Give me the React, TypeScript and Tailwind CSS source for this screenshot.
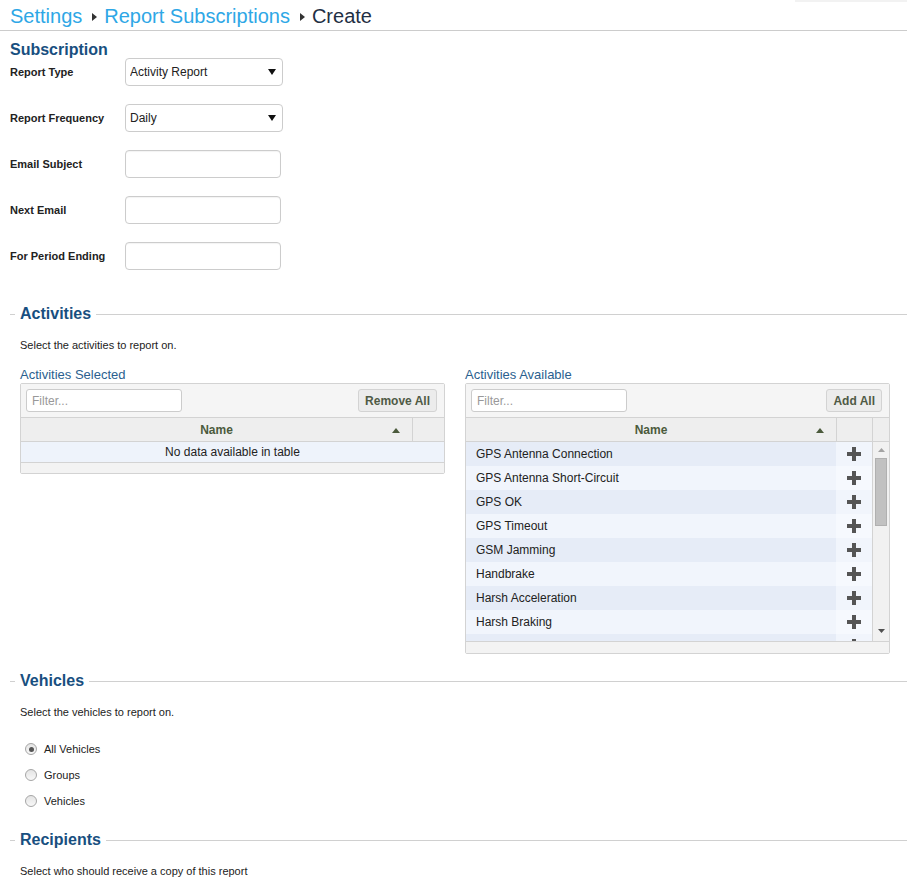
import { useState } from "react"

const activities = [
  "GPS Antenna Connection",
  "GPS Antenna Short-Circuit",
  "GPS OK",
  "GPS Timeout",
  "GSM Jamming",
  "Handbrake",
  "Harsh Acceleration",
  "Harsh Braking",
  "Idling",
]

function Legend({ title }: { title: string }) {
  return (
    <div className="flex items-center h-[20px] pl-[10px]">
      <div className="w-[5px] h-px bg-[#d0d0d0]" />
      <span className="px-[5px] text-[16px] font-bold leading-[20px] text-[#184f80]">{title}</span>
      <div className="flex-1 h-px bg-[#d0d0d0]" />
    </div>
  )
}

function SortUp() {
  return (
    <svg width="8" height="5" viewBox="0 0 8 5" className="absolute right-[12px] top-[10px]">
      <path d="M0 5 L4 0 L8 5 Z" fill="#4b5a3c" />
    </svg>
  )
}

function Plus() {
  return (
    <svg width="14" height="14" viewBox="0 0 14 14">
      <rect x="5" y="0" width="4" height="14" fill="#555" />
      <rect x="0" y="5" width="14" height="4" fill="#555" />
    </svg>
  )
}

function Toolbar({ label }: { label: string }) {
  return (
    <div className="flex items-center justify-between h-[34px] px-[5px] bg-[#f5f5f5] border-b border-[#d3d3d3]">
      <input
        placeholder="Filter..."
        className="w-[156px] h-[23px] px-[5px] text-[12px] bg-white border border-[#cccccc] rounded-[3px] outline-none placeholder:text-[#999]"
      />
      <button className="h-[23px] px-[6px] mr-[2px] text-[12px] font-bold text-[#4f5a45] bg-[#ececec] border border-[#d3d3d3] rounded-[3px]">
        {label}
      </button>
    </div>
  )
}

function SelectBox({ value, options }: { value: string; options: string[] }) {
  const [v, setV] = useState(value)
  return (
    <div className="relative w-[158px] h-[28px]">
      <select
        value={v}
        onChange={(e) => setV(e.target.value)}
        className="appearance-none w-full h-full pl-[4px] text-[12px] text-[#222] bg-white border border-[#cccccc] rounded-[4px] outline-none"
      >
        {options.map((o) => (
          <option key={o}>{o}</option>
        ))}
      </select>
      <svg width="8" height="6" viewBox="0 0 8 6" className="absolute right-[7px] top-[11px] pointer-events-none">
        <path d="M0 0 L8 0 L4 6 Z" fill="#111" />
      </svg>
    </div>
  )
}

function Radio({ label, checked }: { label: string; checked?: boolean }) {
  return (
    <div className="flex items-center h-[26px] pl-[25px]">
      <span className="flex items-center justify-center w-[12px] h-[12px] rounded-full border border-[#a6a6a6] bg-gradient-to-b from-[#e4e4e4] to-[#f8f8f8]">
        {checked && <span className="w-[5px] h-[5px] rounded-full bg-[#555]" />}
      </span>
      <span className="ml-[7px] text-[11px] text-[#222]">{label}</span>
    </div>
  )
}

function Crumb() {
  return (
    <svg width="5" height="8" viewBox="0 0 5 8" className="ml-[10px] mr-[7px] mt-[2px]">
      <path d="M0 0 L5 4 L0 8 Z" fill="#333" />
    </svg>
  )
}

export default function App() {
  const row = "flex items-center h-[28px]"
  const label = "w-[115px] text-[11px] font-bold text-[#222]"
  const input =
    "w-[156px] h-[28px] px-[5px] text-[12px] bg-white border border-[#cccccc] rounded-[4px] shadow-[inset_0_1px_1px_rgba(0,0,0,0.05)] outline-none"

  return (
    <div className="relative w-[907px] min-h-[887px] bg-white font-['Liberation_Sans',Arial,sans-serif] text-[#222]">
      <div className="absolute right-0 top-0 w-[112px] h-[2px] bg-[#f2f2f2]" />

      <div className="flex items-center h-[31px] pt-[2px] px-[10px] border-b border-[#cccccc] text-[20px] leading-none">
        <span className="text-[#2ea7e6]">Settings</span>
        <Crumb />
        <span className="text-[#2ea7e6]">Report Subscriptions</span>
        <Crumb />
        <span className="text-[#1f2f44]">Create</span>
      </div>

      <div className="px-[10px] pt-[10px]">
        <h2 className="text-[16px] font-bold leading-[17px] text-[#184f80]">Subscription</h2>
        <div className="flex flex-col gap-[18px]">
          <div className={row}>
            <span className={label}>Report Type</span>
            <SelectBox value="Activity Report" options={["Activity Report", "Trip Report", "Summary Report"]} />
          </div>
          <div className={row}>
            <span className={label}>Report Frequency</span>
            <SelectBox value="Daily" options={["Daily", "Weekly", "Monthly"]} />
          </div>
          <div className={row}>
            <span className={label}>Email Subject</span>
            <input className={input} />
          </div>
          <div className={row}>
            <span className={label}>Next Email</span>
            <input className={input} />
          </div>
          <div className={row}>
            <span className={label}>For Period Ending</span>
            <input className={input} />
          </div>
        </div>
      </div>

      <div className="mt-[34px]">
        <Legend title="Activities" />
        <p className="mt-[15px] pl-[20px] text-[11px] leading-[13px]">Select the activities to report on.</p>

        <div className="flex items-start gap-[20px] pl-[20px] pr-[17px] mt-[15px]">
          <div className="flex-1">
            <div className="text-[13px] leading-[16px] text-[#2b5f8f]">Activities Selected</div>
            <div className="border border-[#d3d3d3] rounded-[2px]">
              <Toolbar label="Remove All" />
              <div className="flex h-[24px] bg-[#eeeeee] border-b border-[#d3d3d3]">
                <div className="relative flex-1 flex items-center justify-center text-[12px] font-bold text-[#4b5a3c]">
                  Name
                  <SortUp />
                </div>
                <div className="w-[32px] border-l border-[#d3d3d3]" />
              </div>
              <div className="flex items-center justify-center h-[21px] bg-[#eef3fb] border-b border-[#d3d3d3] text-[12px] text-[#222]">
                No data available in table
              </div>
              <div className="h-[10px] bg-[#f3f3f3]" />
            </div>
          </div>

          <div className="flex-1">
            <div className="text-[13px] leading-[16px] text-[#2b5f8f]">Activities Available</div>
            <div className="border border-[#d3d3d3] rounded-[2px]">
              <Toolbar label="Add All" />
              <div className="flex h-[24px] bg-[#eeeeee] border-b border-[#d3d3d3]">
                <div className="relative flex-1 flex items-center justify-center text-[12px] font-bold text-[#4b5a3c]">
                  Name
                  <SortUp />
                </div>
                <div className="w-[36px] border-l border-[#d3d3d3]" />
                <div className="w-[17px] border-l border-[#d3d3d3]" />
              </div>
              <div className="flex h-[200px] border-b border-[#d3d3d3]">
                <div className="flex-1 overflow-hidden">
                  {activities.map((a, i) => (
                    <div key={a} className="flex h-[24px]">
                      <div
                        className={`flex-1 flex items-center pl-[10px] text-[12px] text-[#222] ${
                          i % 2 === 0 ? "bg-[#e6ecf7]" : "bg-[#f1f5fc]"
                        }`}
                      >
                        {a}
                      </div>
                      <div
                        className={`w-[36px] flex items-center justify-center ${
                          i % 2 === 0 ? "bg-[#f1f5fc]" : "bg-[#f6f9fe]"
                        }`}
                      >
                        <Plus />
                      </div>
                    </div>
                  ))}
                </div>
                <div className="w-[17px] flex flex-col items-center bg-[#f1f1f1] border-l border-[#d3d3d3]">
                  <svg width="7" height="4" viewBox="0 0 7 4" className="mt-[6px]">
                    <path d="M0 4 L3.5 0 L7 4 Z" fill="#a3a3a3" />
                  </svg>
                  <div className="w-[12px] h-[68px] mt-[6px] bg-[#c1c1c1] border border-[#b0b0b0]" />
                  <div className="flex-1" />
                  <svg width="7" height="4" viewBox="0 0 7 4" className="mb-[8px]">
                    <path d="M0 0 L7 0 L3.5 4 Z" fill="#505050" />
                  </svg>
                </div>
              </div>
              <div className="h-[11px] bg-[#f3f3f3]" />
            </div>
          </div>
        </div>
      </div>

      <div className="mt-[17px]">
        <Legend title="Vehicles" />
        <p className="mt-[15px] pl-[20px] text-[11px] leading-[13px]">Select the vehicles to report on.</p>
        <div className="mt-[17px]">
          <Radio label="All Vehicles" checked />
          <Radio label="Groups" />
          <Radio label="Vehicles" />
        </div>
      </div>

      <div className="mt-[16px]">
        <Legend title="Recipients" />
        <p className="mt-[15px] pl-[20px] text-[11px] leading-[13px]">Select who should receive a copy of this report</p>
      </div>
    </div>
  )
}
